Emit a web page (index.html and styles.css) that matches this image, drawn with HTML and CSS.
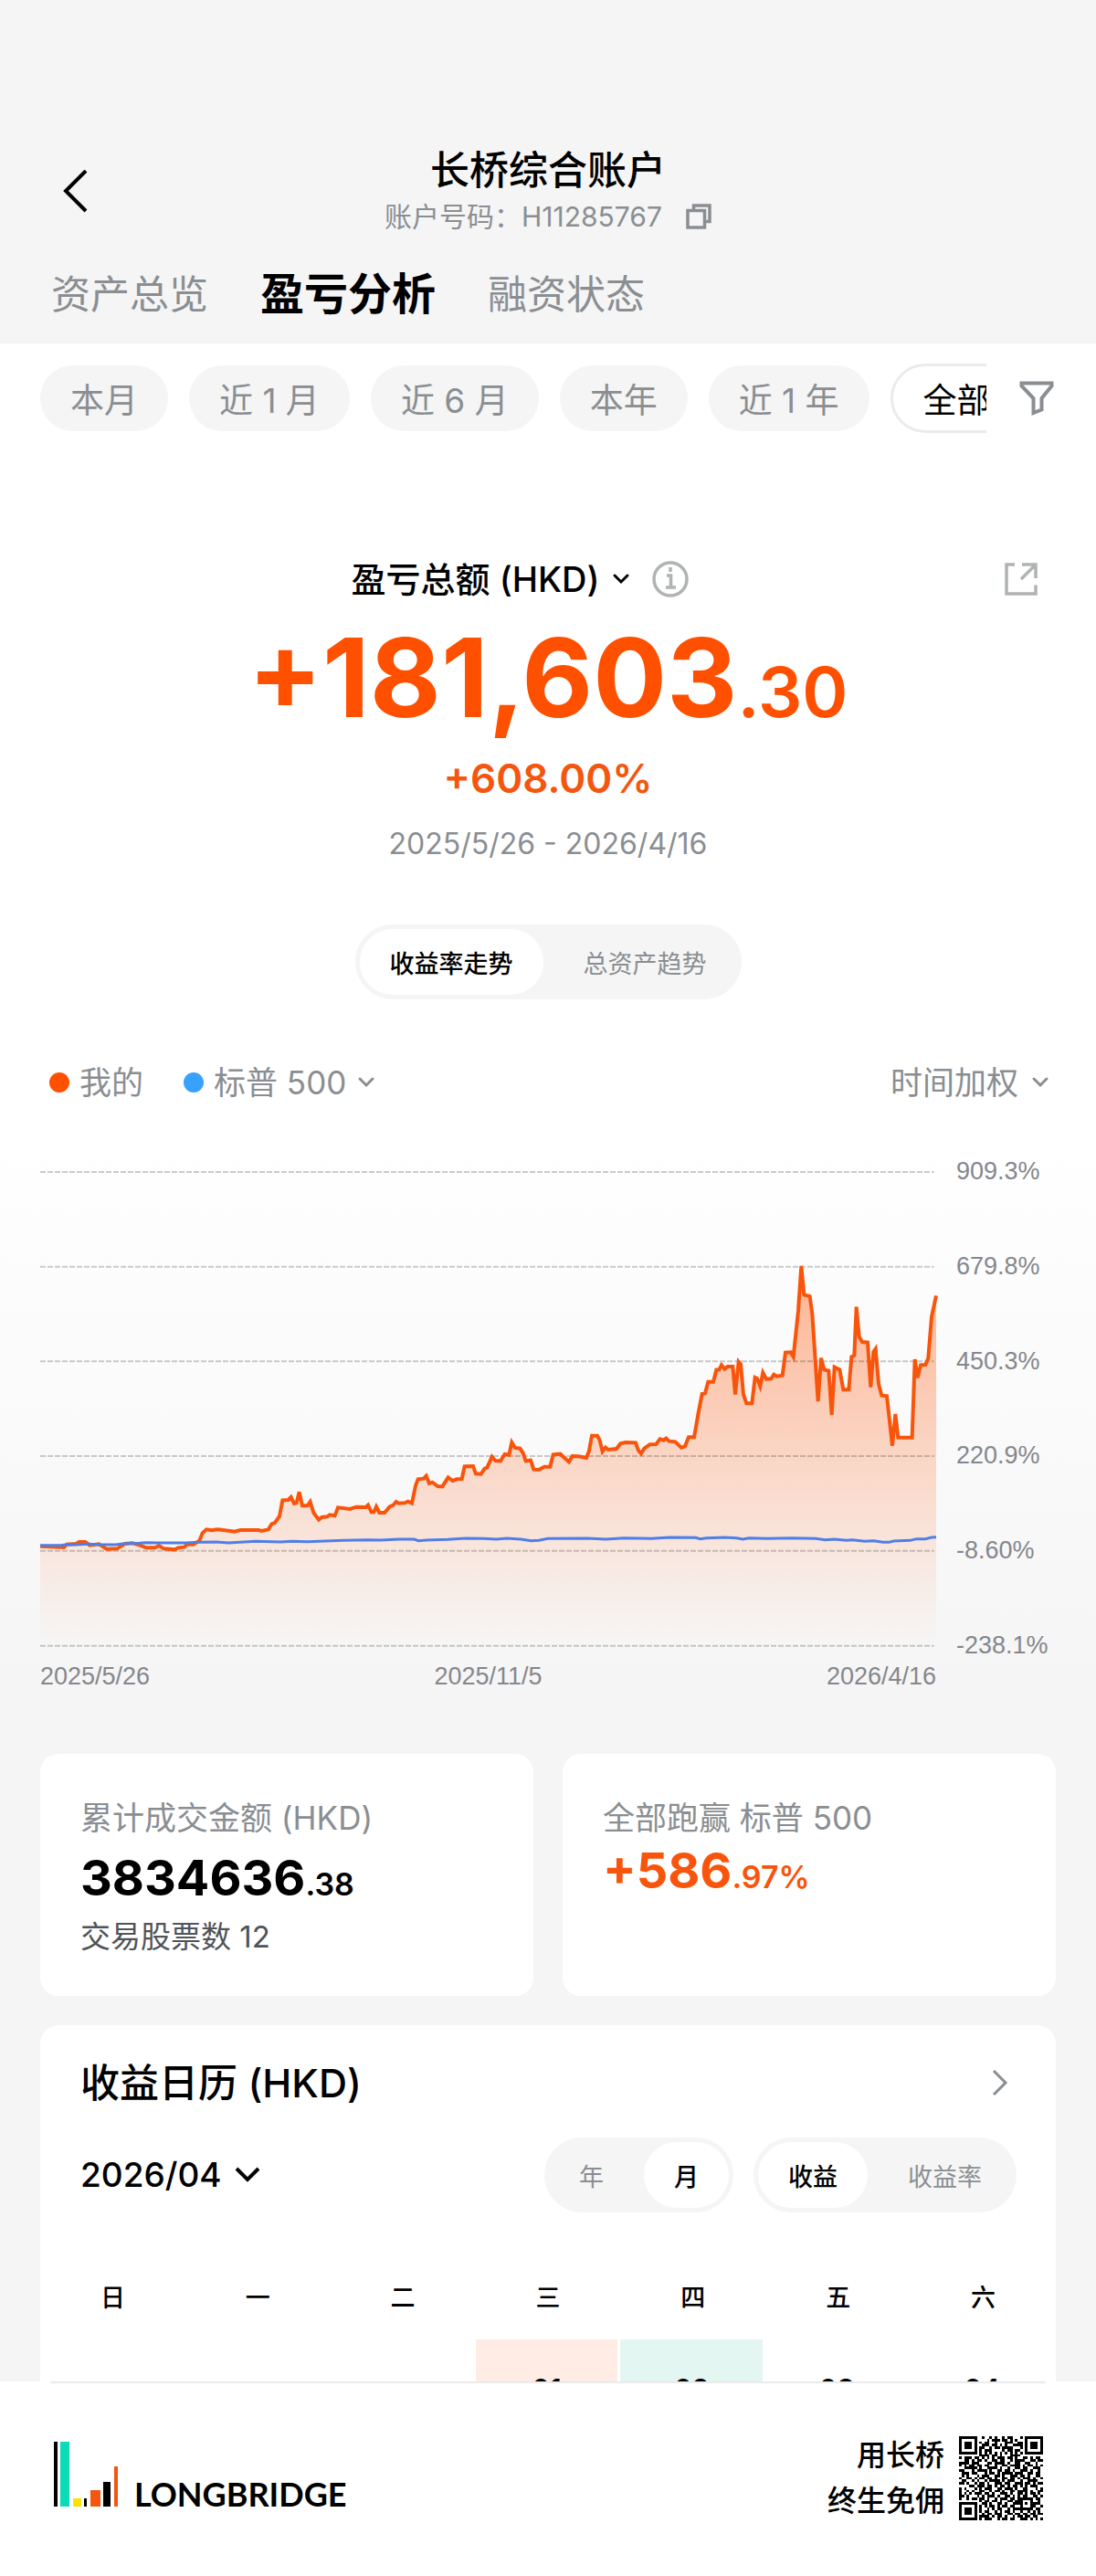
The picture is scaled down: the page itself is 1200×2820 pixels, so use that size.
FILE: index.html
```html
<!DOCTYPE html>
<html lang="zh-CN">
<head>
<meta charset="utf-8">
<meta name="viewport" content="width=device-width, initial-scale=1">
<title>长桥综合账户</title>
<link rel="stylesheet" href="styles.css">
</head>
<body>
<div class="app">
  <header class="header">
    <div class="title-row">
      <button class="icon-btn back" aria-label="返回">
        <svg width="28" height="48" viewBox="0 0 28 48" fill="none" stroke="#000" stroke-width="4"><path d="M26 1 4 23 26 45"/></svg>
      </button>
      <div class="title-text">
        <h1 class="title">长桥综合账户</h1>
        <div class="account">
          <span>账户号码：H11285767</span>
          <button class="icon-btn" aria-label="复制">
            <svg width="28" height="28" viewBox="0 0 28 28" fill="none" stroke="#8a8e92" stroke-width="3.500"><path d="M2 7.500h18.500v18.500H2zM8.500 7.500V2h17.500v17.500h-5.500"/></svg>
          </button>
        </div>
      </div>
    </div>
    <nav class="tabs">
      <a class="tab" href="#">资产总览</a>
      <a class="tab tab-active" href="#" aria-current="page">盈亏分析</a>
      <a class="tab" href="#">融资状态</a>
    </nav>
  </header>

  <main class="content">
    <div class="filters">
      <div class="chips">
        <button class="chip">本月</button>
        <button class="chip">近 1 月</button>
        <button class="chip">近 6 月</button>
        <button class="chip">本年</button>
        <button class="chip">近 1 年</button>
        <button class="chip chip-active">全部</button>
      </div>
      <button class="icon-btn" aria-label="筛选">
        <svg width="38" height="38" viewBox="0 0 38 38" fill="none" stroke="#8a8e92" stroke-width="4"><path d="M2.500 2.500h33v3L24.500 19v12.500l-9 3.500V19L2.500 5.500z"/></svg>
      </button>
    </div>

    <section class="hero">
      <div class="hero-head">
        <div class="hero-label">
          <label class="picker">
            <select class="select select-hero" aria-label="盈亏总额币种"><option>盈亏总额 (HKD)</option></select>
            <svg width="20" height="14" viewBox="0 0 20 14" fill="none" stroke="#000" stroke-width="3" stroke-linecap="round"><path d="M3 3l7 7 7-7"/></svg>
          </label>
          <button class="icon-btn" aria-label="说明">
            <svg width="40" height="40" viewBox="0 0 40 40" fill="none" stroke="#b0b3b4" stroke-width="3.500"><circle cx="20" cy="20" r="18"/><path d="M20 7v5M16 16h4.500v12M15 29h11" stroke-width="3.600"/></svg>
          </button>
        </div>
        <button class="icon-btn export" aria-label="分享">
          <svg width="36" height="36" viewBox="0 0 36 36" fill="none" stroke="#b0b3b4" stroke-width="3.500"><path d="M11 2H2v32h32V24.500M19 2h15v15M33 3 18 18"/></svg>
        </button>
      </div>
      <p class="amount">+181,603<span class="amount-dec">.30</span></p>
      <p class="percent">+608.00%</p>
      <p class="period">2025/5/26 - 2026/4/16</p>
      <div class="segment">
        <button class="seg seg-active" aria-pressed="true">收益率走势</button>
        <button class="seg" aria-pressed="false">总资产趋势</button>
      </div>
    </section>

    <section class="trend">
      <div class="legend">
        <span class="legend-item"><i class="dot dot-mine"></i>我的</span>
        <label class="picker legend-item"><i class="dot dot-index"></i>
          <select class="select" aria-label="对比指数"><option>标普 500</option></select>
          <svg width="20" height="14" viewBox="0 0 20 14" fill="none" stroke="#8a8e92" stroke-width="3" stroke-linecap="round"><path d="M3 3l7 7 7-7"/></svg>
        </label>
        <label class="picker legend-right">
          <select class="select" aria-label="收益率算法"><option>时间加权</option></select>
          <svg width="20" height="14" viewBox="0 0 20 14" fill="none" stroke="#8a8e92" stroke-width="3" stroke-linecap="round"><path d="M3 3l7 7 7-7"/></svg>
        </label>
      </div>
      <div class="chart">
        <svg class="plot" viewBox="42 -231 2943 1557" preserveAspectRatio="none" fill="none" role="img" aria-label="收益率走势图">
          <defs>
            <linearGradient id="area" gradientUnits="userSpaceOnUse" x1="0" y1="78" x2="0" y2="1325">
              <stop offset="0" stop-color="#ff5000" stop-opacity=".42"/>
              <stop offset="1" stop-color="#ff5000" stop-opacity="0"/>
            </linearGradient>
          </defs>
          <path fill="url(#area)" d="M42 998L75 1000 120 1002 130 992 160 990 170 984 190 984 205 995 235 991 260 1007 295 1006 320 990 345 988 370 995 390 1003 420 1003 432 996 448 1006 485 1009 495 1003 515 1001 525 992 545 992 565 980 575 955 588 943 605 946 625 943 680 950 700 945 760 945 768 948 792 943 802 925 812 922 828 900 838 847 857 846 866 837 876 858 884 856 893 820 903 865 920 865 929 852 940 888 957 911 967 903 985 901 993 895 1010 898 1020 871 1060 876 1080 869 1112 870 1119 863 1130 886 1138 886 1146 868 1156 888 1173 888 1190 868 1202 863 1211 852 1220 857 1240 856 1250 851 1263 857 1275 800 1283 778 1302 776 1310 767 1320 792 1330 788 1348 801 1363 802 1382 772 1397 783 1410 778 1427 777 1436 736 1464 735 1473 760 1490 761 1502 743 1510 740 1526 704 1537 717 1554 718 1568 696 1582 698 1591 657 1602 675 1618 677 1628 692 1637 718 1653 716 1663 746 1680 747 1698 737 1717 737 1727 697 1750 695 1779 721 1790 702 1810 703 1836 708 1845 685 1854 635 1872 635 1880 650 1889 687 1899 674 1908 681 1935 678 1948 661 1965 657 1998 658 2007 683 2016 694 2026 677 2045 664 2065 663 2078 646 2090 650 2098 644 2108 653 2128 655 2148 674 2160 670 2172 640 2190 640 2204 560 2216 498 2226 496 2236 458 2253 458 2263 419 2272 418 2280 403 2290 416 2300 408 2317 408 2325 500 2336 392 2343 400 2352 500 2362 529 2380 529 2390 444 2397 447 2407 473 2416 428 2427 449 2443 448 2452 434 2462 440 2480 437 2490 362 2507 361 2516 376 2532 225 2542 78 2551 172 2570 177 2578 235 2597 522 2607 380 2617 418 2632 422 2642 567 2651 410 2668 418 2680 484 2698 484 2707 376 2716 372 2723 212 2732 310 2742 327 2760 329 2770 476 2779 360 2786 350 2796 465 2806 503 2823 505 2841 668 2851 564 2860 641 2906 641 2915 384 2924 445 2934 403 2950 402 2959 380 2970 245 2985 175V1325H42z"/>
          <path class="grid-line" d="M42-231H2978M42 80H2978M42 391H2978M42 702H2978M42 1013H2978M42 1325H2978"/>
          <path class="line-mine" d="M42 998L75 1000 120 1002 130 992 160 990 170 984 190 984 205 995 235 991 260 1007 295 1006 320 990 345 988 370 995 390 1003 420 1003 432 996 448 1006 485 1009 495 1003 515 1001 525 992 545 992 565 980 575 955 588 943 605 946 625 943 680 950 700 945 760 945 768 948 792 943 802 925 812 922 828 900 838 847 857 846 866 837 876 858 884 856 893 820 903 865 920 865 929 852 940 888 957 911 967 903 985 901 993 895 1010 898 1020 871 1060 876 1080 869 1112 870 1119 863 1130 886 1138 886 1146 868 1156 888 1173 888 1190 868 1202 863 1211 852 1220 857 1240 856 1250 851 1263 857 1275 800 1283 778 1302 776 1310 767 1320 792 1330 788 1348 801 1363 802 1382 772 1397 783 1410 778 1427 777 1436 736 1464 735 1473 760 1490 761 1502 743 1510 740 1526 704 1537 717 1554 718 1568 696 1582 698 1591 657 1602 675 1618 677 1628 692 1637 718 1653 716 1663 746 1680 747 1698 737 1717 737 1727 697 1750 695 1779 721 1790 702 1810 703 1836 708 1845 685 1854 635 1872 635 1880 650 1889 687 1899 674 1908 681 1935 678 1948 661 1965 657 1998 658 2007 683 2016 694 2026 677 2045 664 2065 663 2078 646 2090 650 2098 644 2108 653 2128 655 2148 674 2160 670 2172 640 2190 640 2204 560 2216 498 2226 496 2236 458 2253 458 2263 419 2272 418 2280 403 2290 416 2300 408 2317 408 2325 500 2336 392 2343 400 2352 500 2362 529 2380 529 2390 444 2397 447 2407 473 2416 428 2427 449 2443 448 2452 434 2462 440 2480 437 2490 362 2507 361 2516 376 2532 225 2542 78 2551 172 2570 177 2578 235 2597 522 2607 380 2617 418 2632 422 2642 567 2651 410 2668 418 2680 484 2698 484 2707 376 2716 372 2723 212 2732 310 2742 327 2760 329 2770 476 2779 360 2786 350 2796 465 2806 503 2823 505 2841 668 2851 564 2860 641 2906 641 2915 384 2924 445 2934 403 2950 402 2959 380 2970 245 2985 175"/>
          <path class="line-index" d="M42 995L110 995 130 992 160 993 200 991 240 993 290 993 320 989 370 988 390 986 430 987 520 987 565 985 620 984 660 987 700 985 750 982 830 984 870 982 920 983 980 981 1040 979 1120 977 1160 978 1220 975 1270 975 1285 980 1310 978 1380 976 1440 972 1500 973 1540 975 1575 972 1620 975 1655 980 1680 979 1710 973 1840 972 1900 975 1960 971 2050 973 2110 969 2195 970 2210 974 2230 971 2290 969 2330 971 2350 975 2370 971 2430 973 2510 971 2590 973 2620 977 2650 975 2690 979 2710 977 2750 982 2780 980 2810 985 2830 985 2845 981 2900 979 2920 974 2950 974 2970 969 2985 968"/>
        </svg>
        <div class="y-axis">
          <span>909.3%</span><span>679.8%</span><span>450.3%</span><span>220.9%</span><span>-8.60%</span><span>-238.1%</span>
        </div>
        <div class="x-axis">
          <span>2025/5/26</span><span>2025/11/5</span><span>2026/4/16</span>
        </div>
      </div>
    </section>

    <section class="stats">
      <article class="card stat">
        <h2 class="stat-label">累计成交金额 (HKD)</h2>
        <p class="stat-value">3834636<span class="stat-dec">.38</span></p>
        <p class="stat-note">交易股票数 12</p>
      </article>
      <article class="card stat stat-tight">
        <h2 class="stat-label">全部跑赢 标普 500</h2>
        <p class="stat-value up">+586<span class="stat-dec">.97%</span></p>
      </article>
    </section>

    <section class="card calendar">
      <div class="cal-head">
        <h2 class="cal-title">收益日历 (HKD)</h2>
        <button class="icon-btn" aria-label="查看更多">
          <svg width="18" height="30" viewBox="0 0 18 30" fill="none" stroke="#8a8e92" stroke-width="3"><path d="M2 2l13 13L2 28"/></svg>
        </button>
      </div>
      <div class="cal-tools">
        <label class="picker cal-month">
          <select class="select select-month" aria-label="月份"><option>2026/04</option></select>
          <svg width="30" height="20" viewBox="0 0 30 20" fill="none" stroke="#000" stroke-width="4"><path d="M3 3l12 12L27 3"/></svg>
        </label>
        <div class="segment">
          <button class="seg" aria-pressed="false">年</button>
          <button class="seg seg-active" aria-pressed="true">月</button>
        </div>
        <div class="segment">
          <button class="seg seg-active" aria-pressed="true">收益</button>
          <button class="seg" aria-pressed="false">收益率</button>
        </div>
      </div>
      <table class="cal-table">
        <thead><tr><th>日</th><th>一</th><th>二</th><th>三</th><th>四</th><th>五</th><th>六</th></tr></thead>
        <tbody><tr><td></td><td></td><td></td><td class="gain">01</td><td class="loss">02</td><td>03</td><td>04</td></tr></tbody>
      </table>
    </section>
  </main>

  <footer class="footer">
    <div class="footer-inner">
      <div class="brand">
        <svg width="70" height="71" viewBox="0 0 70 71"><path fill="#000" d="M0 0h4v71H0zM33 62h3v9h-3zM54 44h8v27h-8z"/><path fill="#0bdbb6" d="M7 0h10v71H7z"/><path fill="#ffe100" d="M21 62h9v9h-9z"/><path fill="#f4560f" d="M40 53h11v18H40zM66 27h4v44h-4z"/></svg>
        <span class="wordmark">LONGBRIDGE</span>
      </div>
      <div class="promo">
        <p class="slogan">用长桥<br>终生免佣</p>
        <svg id="qr" class="qr" viewBox="0 0 33 33" role="img" aria-label="下载二维码"></svg>
      </div>
    </div>
  </footer>
</div>
<script src="qr.js"></script>
</body>
</html>
```
FILE: styles.css
```css
* { box-sizing: border-box; }

body {
  margin: 0;
  background: #fff;
  color: #000;
  font-family: Inter, "Noto Sans CJK SC", sans-serif;
}

h1, h2, p { margin: 0; }

button, select {
  margin: 0;
  padding: 0;
  border: 0;
  background: none;
  color: inherit;
  font: inherit;
}

svg { display: block; flex: none; }

.app {
  display: flex;
  flex-direction: column;
  height: 100vh;
}

.icon-btn { display: flex; flex: none; }

/* header */
.header {
  flex: none;
  padding: 159px 56px 24px;
  background: #f5f5f5;
}

.title-row {
  display: grid;
  grid-template-columns: 1fr auto 1fr;
  align-items: center;
}

.back { justify-self: start; padding-left: 12px; }
.title-text { text-align: center; }
.title { font-size: 43px; line-height: 54px; font-weight: 500; }

.account {
  display: flex;
  align-items: center;
  justify-content: center;
  gap: 26px;
  font-size: 30px;
  line-height: 48px;
  color: #8a8e92;
}

.tabs {
  display: flex;
  align-items: center;
  gap: 57px;
  margin-top: 31px;
  line-height: 60px;
}

.tab { font-size: 43px; color: #8a8e92; text-decoration: none; }
.tab-active { font-size: 48px; font-weight: 700; color: #000; }

/* scrolling page, cut off by the footer */
.content {
  flex: 1;
  min-height: 0;
  overflow: hidden;
  background: #f5f5f5;
}

.filters {
  display: flex;
  align-items: center;
  gap: 36px;
  padding: 22px 46px 0 44px;
  background: #fff;
}

.chips {
  display: flex;
  flex: 1;
  align-items: center;
  gap: 23px;
  min-width: 0;
  overflow: hidden;
}

.chip {
  flex: none;
  height: 72px;
  padding: 0 33px;
  border-radius: 36px;
  background: #f5f5f5;
  font-size: 37px;
  color: #8a8e92;
}

.chip-active {
  height: 76px;
  border: 3px solid #ebebec;
  border-radius: 38px;
  background: #fff;
  color: #000;
}

.picker { display: flex; align-items: center; gap: 13px; }
.select { appearance: none; line-height: 50px; }

/* profit summary */
.hero {
  display: flex;
  flex-direction: column;
  align-items: center;
  padding: 138px 64px 66px;
  background: #fff;
}

.hero-head {
  display: grid;
  grid-template-columns: 1fr auto 1fr;
  align-items: center;
  width: 100%;
}

.hero-label {
  display: flex;
  grid-column: 2;
  align-items: center;
  gap: 24px;
  padding-right: 62px;
}

.select-hero { font-size: 38px; line-height: 44px; font-weight: 500; }
.export { justify-self: end; }

.amount {
  margin-top: 26px;
  font-size: 120px;
  line-height: 120px;
  font-weight: 700;
  color: #ff5000;
}

.amount-dec { font-size: 76px; line-height: 76px; font-weight: 600; }

.percent {
  margin-top: 24px;
  font-size: 44px;
  line-height: 52px;
  font-weight: 600;
  color: #f4560f;
}

.period {
  margin: 24px 0 66px;
  font-size: 32px;
  line-height: 44px;
  color: #8a8e92;
}

.segment {
  display: flex;
  gap: 11px;
  padding: 5px;
  border-radius: 41px;
  background: #f5f5f5;
}

.seg {
  height: 72px;
  padding: 0 33px;
  border-radius: 36px;
  font-size: 27px;
  color: #8a8e92;
}

.seg-active { background: #fff; font-weight: 500; color: #000; }

/* return chart */
.trend {
  padding: 0 51px 70px 44px;
  background: linear-gradient(#fff 80px, #f5f5f5 700px);
}

.legend {
  display: flex;
  align-items: center;
  gap: 44px;
  padding-left: 10px;
  font-size: 35px;
  line-height: 50px;
  color: #8a8e92;
}

.legend-item { display: flex; align-items: center; gap: 11px; }
.legend-right { margin-left: auto; }

.dot { width: 22px; height: 22px; border-radius: 50%; }
.dot-mine { background: #ff5000; }
.dot-index { background: #38a0ff; }

.chart {
  display: grid;
  grid-template-columns: 1fr 102px;
  column-gap: 22px;
  margin-top: 73px;
  font-family: "Liberation Sans", Arial, sans-serif;
  font-size: 27px;
  line-height: 30px;
  color: #85878c;
}

.plot { width: 100%; height: 519px; overflow: visible; }
.plot path { vector-effect: non-scaling-stroke; }
.grid-line { stroke: #000; stroke-opacity: .2; stroke-width: 2px; stroke-dasharray: 6 2; }
.line-mine { stroke: #f9540b; stroke-width: 4px; }
.line-index { stroke: #4f7fe6; stroke-width: 3px; }

.y-axis {
  display: flex;
  flex-direction: column;
  justify-content: space-between;
  margin: -16px 0 -14px;
  white-space: nowrap;
}

.x-axis { display: flex; justify-content: space-between; margin-top: 18px; }

/* cards */
.card { border-radius: 20px; background: #fff; }

.stats {
  display: grid;
  grid-template-columns: 1fr 1fr;
  gap: 32px;
  padding: 0 44px;
}

.stat {
  display: flex;
  flex-direction: column;
  gap: 16px;
  padding: 48px 44px 45px;
}

.stat-tight { gap: 8px; }
.stat-label { font-size: 35px; line-height: 44px; font-weight: 400; color: #8a8e92; }
.stat-value { font-size: 54px; line-height: 56px; font-weight: 700; }
.stat-dec { font-size: 34px; line-height: 34px; font-weight: 600; }
.stat-note { font-size: 33px; line-height: 40px; color: #4f5459; }
.up { color: #f9540b; }

/* calendar */
.calendar { margin: 32px 44px 0; padding-top: 33px; }

.cal-head {
  display: flex;
  align-items: center;
  justify-content: space-between;
  padding: 0 52px 0 44px;
}

.cal-title { font-size: 43px; line-height: 60px; font-weight: 500; }

.cal-tools {
  display: flex;
  align-items: center;
  gap: 22px;
  padding: 30px 43px 0 44px;
}

.cal-month { margin-right: auto; }
.select-month { font-size: 37px; font-weight: 500; }

.cal-table {
  width: 100%;
  margin-top: 74px;
  border-collapse: separate;
  border-spacing: 0;
  table-layout: fixed;
  text-align: center;
}

.cal-table th { padding: 0 0 25px; font-size: 27px; line-height: 40px; font-weight: 500; }

.cal-table td {
  height: 160px;
  padding: 38px 0 0;
  border-right: 3px solid #fff;
  vertical-align: top;
  font-size: 30px;
  line-height: 32px;
  font-weight: 600;
}

.gain { background: #ffece5; }
.loss { background: #e4f6f2; }

/* footer */
.footer { flex: none; padding: 0 55px; background: #fff; }

.footer-inner {
  display: flex;
  justify-content: space-between;
  align-items: flex-start;
  padding: 54px 3px 57px 4px;
  border-top: 2px solid #ebebec;
}

.brand { display: flex; align-items: flex-end; gap: 18px; padding-top: 10px; }

.wordmark {
  font-family: Lato, sans-serif;
  font-size: 36px;
  line-height: 28px;
  font-weight: 700;
}

.promo { display: flex; align-items: center; gap: 16px; }
.slogan { font-size: 32px; line-height: 50px; font-weight: 500; text-align: right; }
.qr { width: 92px; height: 92px; }
```
FILE: qr.js
```javascript
// Modules of the download QR code, one string per row.
const rows = [
  "#######..#..#.#..#.##...#.#######",
  "#.....#....#.###.##.#.#...#.....#",
  "#.###.#.#.##..#...###..##.#.###.#",
  "#.###.#..###.##.#.#..####.#.###.#",
  "#.###.#.##..#.##.####...#.#.###.#",
  "#.....#.#.###....#.##.##..#.....#",
  "#######.#.#.#.#.#.#.#.#.#.#######",
  "........####.##.#...####.........",
  "#.###.##.#.#.#.###.##.#..##.#.##.",
  "..##.#.##.#..##.##..#.####..##.##",
  "####.###...##.####.#..##..##..#..",
  "#.#.##.##.##..#..##.####.#.##.#.#",
  "..#####.#..####.#..#..##.##..###.",
  "##...#.####.#..##.##.#..###.#..#.",
  ".###.##...#.##.#.####.###..##.##.",
  ".#.#...#.###..##.#..###.##.#..##.",
  "#..##.#.##.##.#..##.##.#.###.#..#",
  ".##..#.#..#.####.#.###..#..####..",
  "##.#..#.##.#..###.##..###.##.#.##",
  "....##.###.##.#.##.#.##.#.#.###..",
  "#.#...#.#.###..##.###.#..##...#.#",
  "#..#.#..##..#.##.#..##.####.#..##",
  "#.#.#.###.##.#..###.#..##.#.##.#.",
  "##.#...#.#.###.#..##.#.#.##..##.#",
  "#..#.##.##.#..#.###.##.######.##.",
  "........#.##.##.#..##.###...#..#.",
  "#######..##.#..##.#..####.#.####.",
  "#.....#.#.#.##.#.##.##..#...##..#",
  "#.###.#.#..#.#.##..#.########.##.",
  "#.###.#.#.##..#.#.##.#..#..#.#.#.",
  "#.###.#..#.##.###..##.##.##.##.##",
  "#.....#.####.#.##.#..#.##.##.##..",
  "#######.#.###..#.##.##..###.#.#.#"
];

let d = "";
rows.forEach((row, y) => {
  for (const run of row.matchAll(/#+/g)) {
    d += `M${run.index} ${y}h${run[0].length}v1h-${run[0].length}z`;
  }
});

const path = document.createElementNS("http://www.w3.org/2000/svg", "path");
path.setAttribute("d", d);
path.setAttribute("shape-rendering", "crispEdges");
document.getElementById("qr").append(path);
```
